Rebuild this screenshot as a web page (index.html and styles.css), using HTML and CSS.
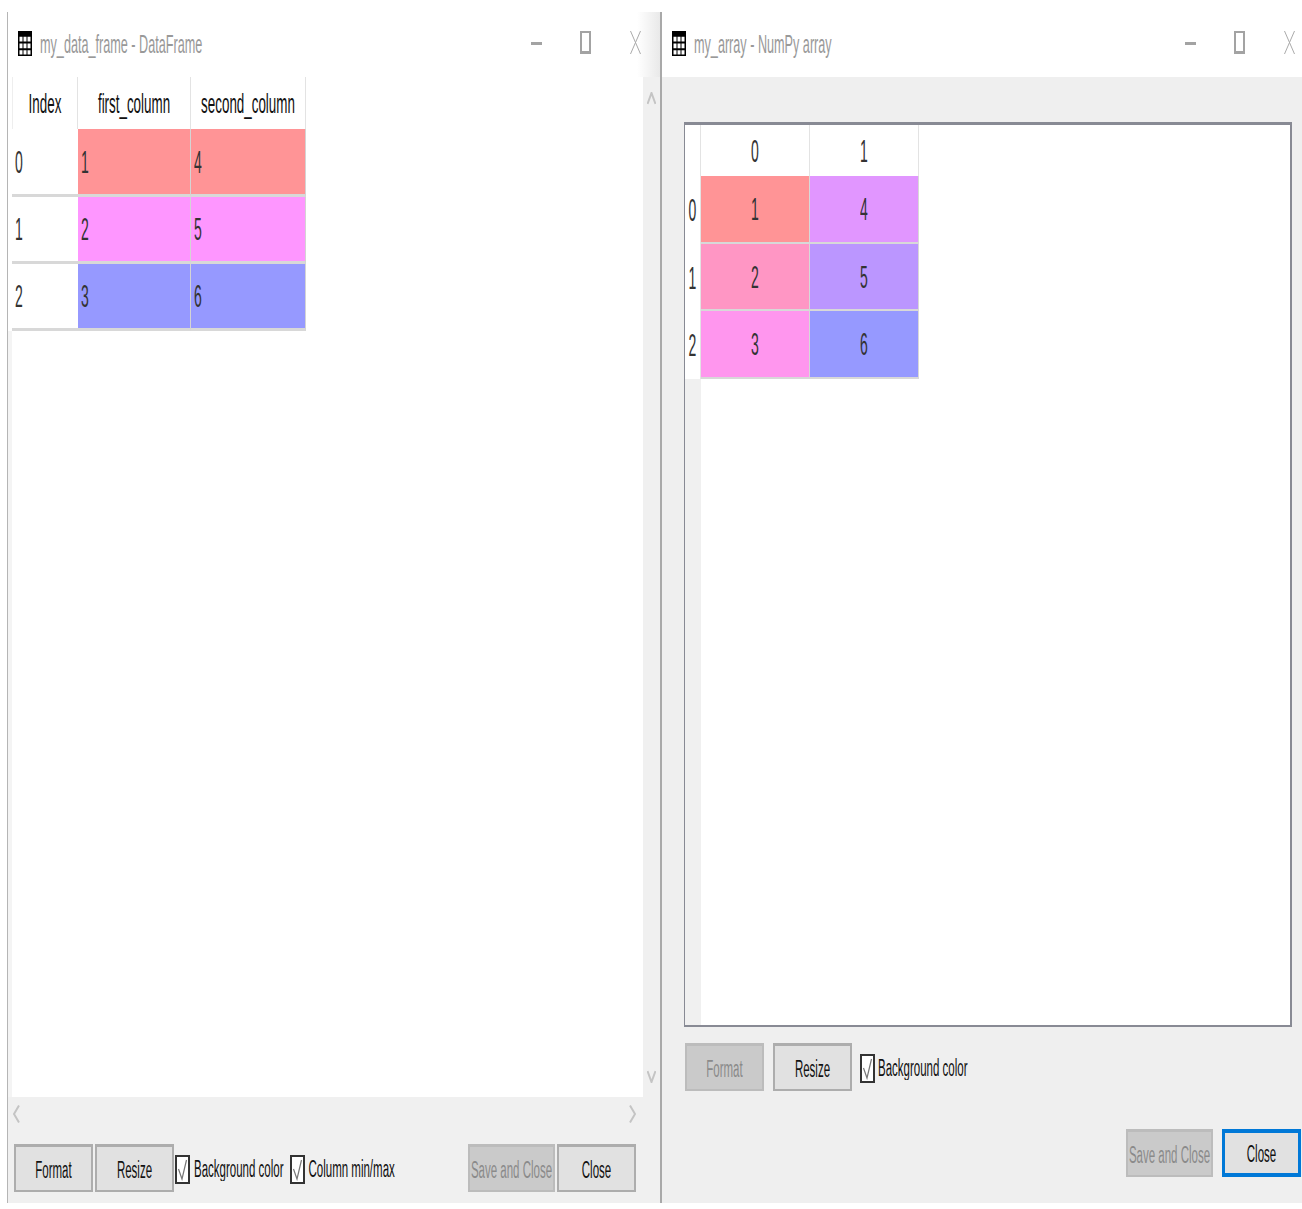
FILE: index.html
```html
<!DOCTYPE html>
<html lang="en">
<head>
<meta charset="utf-8">
<title>Variable explorer editors</title>
<link rel="stylesheet" href="styles.css">
</head>
<body>
<main class="desktop">
  <section class="window window-left">
    <header class="titlebar titlebar-left">
      <svg class="grid-icon" viewBox="0 0 14 24" preserveAspectRatio="none"><path fill="#000" d="M0 0h14v24H0z"/><path fill="#fff" d="M1.500 5.500h3v4.500h-3zM5.500 5.500h3v4.500h-3zM9.500 5.500h3v4.500h-3zM1.500 12h3v4.500h-3zM5.500 12h3v4.500h-3zM9.500 12h3v4.500h-3zM1.500 18.500h3v4h-3zM5.500 18.500h3v4h-3zM9.500 18.500h3v4h-3z"/></svg>
      <span class="title-text"><span class="t">my_data_frame - DataFrame</span></span>
      <div class="controls">
        <span class="ctl-min"></span>
        <span class="ctl-max"></span>
        <svg class="ctl-x" viewBox="0 0 11 23"><path d="M.5 0l10 23M10.500 0L.5 23" stroke="#aaa" stroke-width="1" fill="none"/></svg>
      </div>
    </header>
    <div class="left-main">
      <div class="left-scroll">
        <div class="strip"></div>
        <div class="df-table">
          <div class="hcell"><span class="t">Index</span></div>
          <div class="hcell"><span class="t">first_column</span></div>
          <div class="hcell"><span class="t">second_column</span></div>

          <div class="idx"><span class="t num">0</span></div>
          <div class="cell c-red"><span class="t num">1</span></div>
          <div class="cell c-red"><span class="t num">4</span></div>

          <div class="idx"><span class="t num">1</span></div>
          <div class="cell c-pink"><span class="t num">2</span></div>
          <div class="cell c-pink"><span class="t num">5</span></div>

          <div class="idx"><span class="t num">2</span></div>
          <div class="cell c-blue"><span class="t num">3</span></div>
          <div class="cell c-blue"><span class="t num">6</span></div>
        </div>
      </div>
      <div class="vscroll">
        <svg class="chev" viewBox="0 0 9 13"><path d="M.5 12L4.500 1l4 11" fill="none" stroke="#c4c4c4" stroke-width="2"/></svg>
        <svg class="chev" viewBox="0 0 9 13"><path d="M.5 1l4 11 4-11" fill="none" stroke="#c4c4c4" stroke-width="2"/></svg>
      </div>
    </div>
    <div class="hscroll">
      <svg class="chev-h" viewBox="0 0 7 18"><path d="M6 .5L1 9l5 8.500" fill="none" stroke="#c4c4c4" stroke-width="2"/></svg>
      <svg class="chev-h" viewBox="0 0 7 18"><path d="M1 .5L6 9l-5 8.500" fill="none" stroke="#c4c4c4" stroke-width="2"/></svg>
    </div>
    <footer class="left-footer">
      <button class="btn"><span class="t">Format</span></button>
      <button class="btn btn-resize"><span class="t">Resize</span></button>
      <label class="check"><span class="box"><svg viewBox="0 0 11 25"><path d="M1.500 12l3.500 10 4.500-19" fill="none" stroke="#777" stroke-width="1.200"/></svg></span><span class="t">Background color</span></label>
      <label class="check"><span class="box"><svg viewBox="0 0 11 25"><path d="M1.500 12l3.500 10 4.500-19" fill="none" stroke="#777" stroke-width="1.200"/></svg></span><span class="t">Column min/max</span></label>
      <div class="spacer"></div>
      <button class="btn btn-save" disabled><span class="t">Save and Close</span></button>
      <button class="btn btn-close"><span class="t">Close</span></button>
    </footer>
  </section>

  <section class="window window-right">
    <header class="titlebar">
      <svg class="grid-icon" viewBox="0 0 14 24" preserveAspectRatio="none"><path fill="#000" d="M0 0h14v24H0z"/><path fill="#fff" d="M1.500 5.500h3v4.500h-3zM5.500 5.500h3v4.500h-3zM9.500 5.500h3v4.500h-3zM1.500 12h3v4.500h-3zM5.500 12h3v4.500h-3zM9.500 12h3v4.500h-3zM1.500 18.500h3v4h-3zM5.500 18.500h3v4h-3zM9.500 18.500h3v4h-3z"/></svg>
      <span class="title-text"><span class="t">my_array - NumPy array</span></span>
      <div class="controls">
        <span class="ctl-min"></span>
        <span class="ctl-max"></span>
        <svg class="ctl-x" viewBox="0 0 11 23"><path d="M.5 0l10 23M10.500 0L.5 23" stroke="#aaa" stroke-width="1" fill="none"/></svg>
      </div>
    </header>
    <div class="right-body">
      <div class="frame">
        <div class="np-table">
          <div class="corner"></div>
          <div class="hcell"><span class="t num">0</span></div>
          <div class="hcell"><span class="t num">1</span></div>

          <div class="np-idx"><span class="t num">0</span></div>
          <div class="np-cell c-red"><span class="t num">1</span></div>
          <div class="np-cell c-violet"><span class="t num">4</span></div>

          <div class="np-idx"><span class="t num">1</span></div>
          <div class="np-cell c-rose"><span class="t num">2</span></div>
          <div class="np-cell c-purple"><span class="t num">5</span></div>

          <div class="np-idx"><span class="t num">2</span></div>
          <div class="np-cell c-orchid"><span class="t num">3</span></div>
          <div class="np-cell c-blue"><span class="t num">6</span></div>
        </div>
        <div class="np-rest"></div>
      </div>
      <div class="right-tools">
        <button class="btn btn-save" disabled><span class="t">Format</span></button>
        <button class="btn btn-resize-r"><span class="t">Resize</span></button>
        <label class="check check-r"><span class="box"><svg viewBox="0 0 11 25"><path d="M1.500 12l3.500 10 4.500-19" fill="none" stroke="#777" stroke-width="1.200"/></svg></span><span class="t">Background color</span></label>
      </div>
      <div class="right-actions">
        <button class="btn btn-save" disabled><span class="t">Save and Close</span></button>
        <button class="btn btn-focus"><span class="t">Close</span></button>
      </div>
    </div>
  </section>
</main>
</body>
</html>
```

FILE: styles.css
```css
* { box-sizing: border-box; }
html, body { margin: 0; height: 1209px; background: #fff; overflow: hidden; }
body { font-family: "Liberation Sans", Arial, sans-serif; font-size: 11.500px; color: #111; }

.desktop { display: flex; height: 1191px; margin-top: 12px; padding-left: 7px; }
.window { display: flex; flex-direction: column; height: 100%; border-left: 2px solid #a9a9a9; }
.window-left { width: 653px; border-left-width: 1px; border-left-color: #b5b5b5; }
.window-right { width: 642px; }

.t { display: inline-block; transform: scaleY(2); transform-origin: center; line-height: 14px; white-space: nowrap; }
.num { font-size: 14px; color: #333; transform: scaleY(2.200); }

.titlebar { flex: none; height: 65px; display: flex; align-items: center; background: #fff; padding: 0 0 0 10px; }
.titlebar-left { background: linear-gradient(90deg, #fff 96.500%, #e9e9e9 100%); }
.grid-icon { width: 14px; height: 25px; flex: none; margin-top: -2px; }
.title-text { margin-left: 8px; color: #999; font-size: 12.650px; }
.controls { margin-left: auto; display: flex; align-items: center; width: 115px; height: 24px; margin-top: -4px; padding-left: 1px; }
.titlebar-left .controls { margin-right: 15px; }
.window-right .controls { margin-right: 3px; }
.ctl-min { width: 11px; height: 3px; background: #a3a3a3; flex: none; margin-top: 2px; }
.ctl-max { width: 11px; height: 23px; border: 2px solid #a3a3a3; border-bottom-width: 3px; flex: none; margin-left: 38px; }
.ctl-x { width: 11px; height: 23px; flex: none; margin-left: 39px; }

.left-main { flex: 1; display: flex; min-height: 0; }
.left-scroll { flex: 1; display: flex; background: #fff; }
.strip { width: 4px; margin-top: 254px; background: #f4f4f4; flex: none; }
.df-table { display: grid; grid-template-columns: 66px 113px 115px; grid-template-rows: 52px 68px 67px 67px; align-self: start; }
.hcell { display: flex; align-items: center; justify-content: center; background: #fff; border-right: 1px solid #e3e3e3; font-size: 13.400px; }
.df-table .hcell { padding-top: 4px; }
.df-table .hcell:first-child { border-left: 1px solid #eee; }
.idx { display: flex; align-items: center; padding-left: 3px; background: #fff; border-bottom: 3px solid #d8d8d8; }
.cell { display: flex; align-items: center; padding-left: 3px; border-right: 1px solid #d4d4d4; border-bottom: 3px solid #d8d8d8; }

.c-red { background: #ff9496; }
.c-pink { background: #fe96ff; }
.c-blue { background: #9699ff; }
.c-violet { background: #e196ff; }
.c-rose { background: #ff96c4; }
.c-purple { background: #bb96ff; }
.c-orchid { background: #ff96ee; }

.vscroll { width: 17px; flex: none; background: #f0f0f0; display: flex; flex-direction: column; justify-content: space-between; align-items: center; padding: 15px 0 14px; }
.chev { width: 9px; height: 13px; }
.hscroll { flex: none; height: 47px; background: #f0f0f0; display: flex; justify-content: space-between; align-items: center; padding: 0 24px 14px 5px; }
.chev-h { width: 7px; height: 18px; }

.left-footer { flex: none; height: 59px; background: #f0f0f0; display: flex; align-items: flex-start; padding: 0 24px 0 6px; }
.spacer { flex: 1; }

.btn { width: 79px; height: 48px; padding: 2px 0 0; font: inherit; color: #111; background: #e1e1e1; border: 2px solid #adadad; border-top-width: 3px; display: flex; align-items: center; justify-content: center; }
.btn-resize { margin-left: 2px; }
.btn-save { background: #cacaca; border-color: #bcbcbc; color: #8a8a8a; }
.left-footer .btn-save { width: 87px; }
.btn-close { margin-left: 2px; }

.check { display: flex; align-items: center; height: 48px; margin-left: 1px; padding-top: 2px; }
.check + .check { margin-left: 6px; }
.box { width: 15px; height: 29px; background: #fff; border: 2px solid #333; display: flex; margin-right: 4px; flex: none; }
.box svg { width: 100%; height: 100%; }

.right-body { flex: 1; display: flex; flex-direction: column; background: #efefef; padding: 45px 9px 0 22px; }
.frame { flex: none; height: 905px; width: 608px; background: #fff; border: 2px solid #888a94; border-top-width: 3px; border-left-width: 1px; border-right-width: 2px; display: flex; flex-direction: column; }
.np-table { display: grid; grid-template-columns: 16px 109px 109px; grid-template-rows: 51px 68px 67px 68px; width: 234px; flex: none; }
.corner { background: #fff; border-right: 1px solid #e3e3e3; }
.np-idx { display: flex; align-items: center; justify-content: center; background: #fff; border-right: 1px solid #e3e3e3; }
.np-cell { display: flex; align-items: center; justify-content: center; border-right: 1px solid #d8d8d8; border-bottom: 2px solid #d8d8d8; }
.np-rest { flex: 1; width: 16px; background: #f0f0f0; }

.right-tools { flex: none; display: flex; height: 48px; margin-top: 16px; margin-left: 1px; }
.btn-resize-r { margin-left: 9px; }
.check-r { margin-left: 8px; }
.check-r .box { margin-right: 3px; }
.right-actions { flex: none; display: flex; justify-content: flex-end; gap: 9px; margin-top: 38px; margin-right: -8px; }
.right-actions .btn-save { width: 87px; }
.btn-focus { border: 3px solid #0078d7; border-top-width: 4px; border-bottom-width: 4px; }
```
